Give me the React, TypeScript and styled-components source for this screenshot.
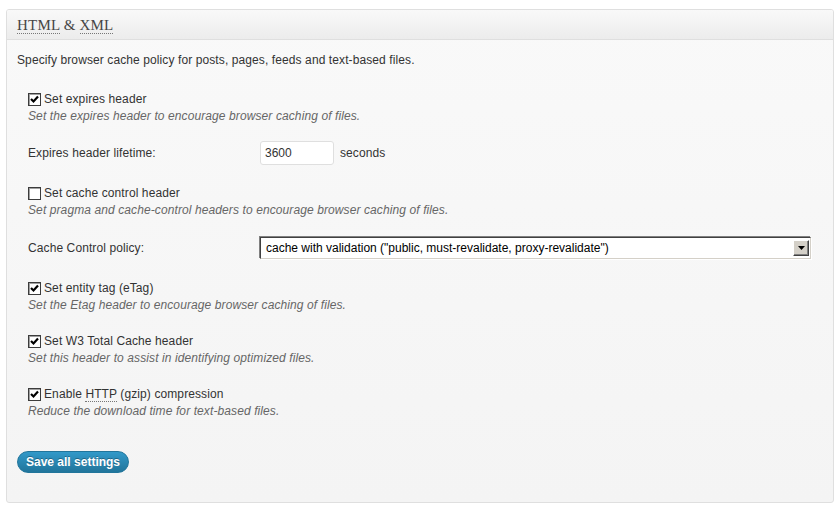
import styled, { createGlobalStyle } from "styled-components";

const GlobalStyle = createGlobalStyle`
    html, body {
        margin: 0;
        padding: 0;
        background: #fff;
    }
    body {
        font-family: "Liberation Sans", Arial, sans-serif;
        font-size: 12px;
        letter-spacing: 0.1px;
        color: #333;
    }
`

const Page = styled.div`
    padding: 9px 6px 4px 6px;
`

const Panel = styled.div`
    border: 1px solid #dfdfdf;
    border-radius: 3px;
    background: linear-gradient(to bottom, #f9f9f9, #f4f4f4);
    box-shadow: 0 1px 0 #fff inset;
    overflow: hidden;
`

const PanelHeader = styled.div`
    height: 29px;
    display: flex;
    align-items: center;
    padding: 0 10px;
    border-bottom: 1px solid #dfdfdf;
    background: linear-gradient(to bottom, #f9f9f9, #ececec);
`

const Title = styled.h3`
    margin: 0;
    font-family: "Liberation Serif", Georgia, serif;
    font-size: 15px;
    font-weight: normal;
    letter-spacing: 0.2px;
    color: #464646;
    line-height: 20px;
`

const Abbr = styled.abbr`
    text-decoration: none;
    border-bottom: 1px dotted #777;
`

const PanelBody = styled.div`
    padding: 12px 10px 29px 10px;
`

const Intro = styled.p`
    margin: 0 0 13px 0;
    line-height: 17px;
`

const Row = styled.div<{ $top?: number; $bottom?: number }>`
    display: flex;
    align-items: center;
    padding: ${p => p.$top ?? 9}px 11px ${p => p.$bottom ?? 10}px 11px;
`

const Stack = styled.div`
    display: flex;
    flex-direction: column;
`

const CheckLabel = styled.label`
    display: flex;
    align-items: center;
    gap: 3px;
    line-height: 17px;
    color: #333;
`

const Box = styled.span`
    width: 13px;
    height: 13px;
    box-sizing: border-box;
    display: inline-flex;
    align-items: center;
    justify-content: center;
    background: #fff;
    border: 1px solid #3c3c3c;
    box-shadow: inset 1px 1px 0 #a0a0a0;
`

const Description = styled.span`
    font-style: italic;
    color: #666;
    line-height: 17px;
`

const FieldLabel = styled.span`
    width: 232px;
    flex: none;
    line-height: 17px;
`

const TextInput = styled.input`
    width: 74px;
    height: 24px;
    box-sizing: border-box;
    border: 1px solid #dfdfdf;
    border-radius: 3px;
    background: #fff;
    padding: 0 4px;
    font-family: "Liberation Sans", Arial, sans-serif;
    font-size: 12px;
    color: #333;
    outline: none;
`

const Unit = styled.span`
    margin-left: 6px;
`

const Select = styled.div`
    width: 551px;
    height: 22px;
    box-sizing: border-box;
    display: flex;
    align-items: center;
    background: #fff;
    border-top: 1px solid #404040;
    border-left: 1px solid #404040;
    border-right: 1px solid #d4d0c8;
    border-bottom: 1px solid #d4d0c8;
    box-shadow: -1px -1px 0 #808080, 1px 1px 0 #fff;
    padding: 0 1px 0 5px;
    color: #000;
    letter-spacing: 0;
`

const SelectText = styled.span`
    flex: 1;
    white-space: nowrap;
`

const SelectButton = styled.span`
    width: 16px;
    height: 16px;
    box-sizing: border-box;
    display: flex;
    align-items: center;
    justify-content: center;
    background: #d4d0c8;
    border-top: 1px solid #fff;
    border-left: 1px solid #fff;
    border-right: 1px solid #404040;
    border-bottom: 1px solid #404040;
    box-shadow: inset -1px -1px 0 #808080;
`

const Footer = styled.div`
    padding-top: 21px;
`

const SaveButton = styled.button`
    height: 22px;
    padding: 0 8px;
    border: 1px solid #21759b;
    border-radius: 11px;
    background: linear-gradient(to bottom, #3299c9, #21759b);
    color: #fff;
    font-family: "Liberation Sans", Arial, sans-serif;
    font-size: 12px;
    font-weight: bold;
    letter-spacing: 0;
    text-shadow: 0 -1px 0 rgba(0, 0, 0, 0.3);
    cursor: pointer;
`

const Check = ({ checked }: { checked: boolean }) => (
    <Box>
        {checked && (
            <svg width="9" height="9" viewBox="0 0 9 9">
                <path d="M1 4 L3.5 6.5 L8 1.5" stroke="#000" strokeWidth="2.2" fill="none" />
            </svg>
        )}
    </Box>
)

const CheckRow = ({ checked, label, desc }: { checked: boolean; label: React.ReactNode; desc: string }) => (
    <Row>
        <Stack>
            <CheckLabel>
                <Check checked={checked} />
                {label}
            </CheckLabel>
            <Description>{desc}</Description>
        </Stack>
    </Row>
)

export default function App() {
    return (
        <Page>
            <GlobalStyle />
            <Panel>
                <PanelHeader>
                    <Title>
                        <Abbr title="Hypertext Markup Language">HTML</Abbr> &amp; <Abbr title="eXtensible Markup Language">XML</Abbr>
                    </Title>
                </PanelHeader>
                <PanelBody>
                    <Intro>Specify browser cache policy for posts, pages, feeds and text-based files.</Intro>
                    <CheckRow
                        checked
                        label="Set expires header"
                        desc="Set the expires header to encourage browser caching of files."
                    />
                    <Row $top={6} $bottom={11}>
                        <FieldLabel>Expires header lifetime:</FieldLabel>
                        <TextInput defaultValue="3600" />
                        <Unit>seconds</Unit>
                    </Row>
                    <CheckRow
                        checked={false}
                        label="Set cache control header"
                        desc="Set pragma and cache-control headers to encourage browser caching of files."
                    />
                    <Row $top={8} $bottom={12}>
                        <FieldLabel>Cache Control policy:</FieldLabel>
                        <Select>
                            <SelectText>cache with validation ("public, must-revalidate, proxy-revalidate")</SelectText>
                            <SelectButton>
                                <svg width="7" height="4" viewBox="0 0 7 4">
                                    <path d="M0 0 H7 L3.5 4 Z" fill="#000" />
                                </svg>
                            </SelectButton>
                        </Select>
                    </Row>
                    <CheckRow
                        checked
                        label="Set entity tag (eTag)"
                        desc="Set the Etag header to encourage browser caching of files."
                    />
                    <CheckRow
                        checked
                        label="Set W3 Total Cache header"
                        desc="Set this header to assist in identifying optimized files."
                    />
                    <CheckRow
                        checked
                        label={<span>Enable <Abbr title="Hypertext Transfer Protocol">HTTP</Abbr> (gzip) compression</span>}
                        desc="Reduce the download time for text-based files."
                    />
                    <Footer>
                        <SaveButton>Save all settings</SaveButton>
                    </Footer>
                </PanelBody>
            </Panel>
        </Page>
    )
}
